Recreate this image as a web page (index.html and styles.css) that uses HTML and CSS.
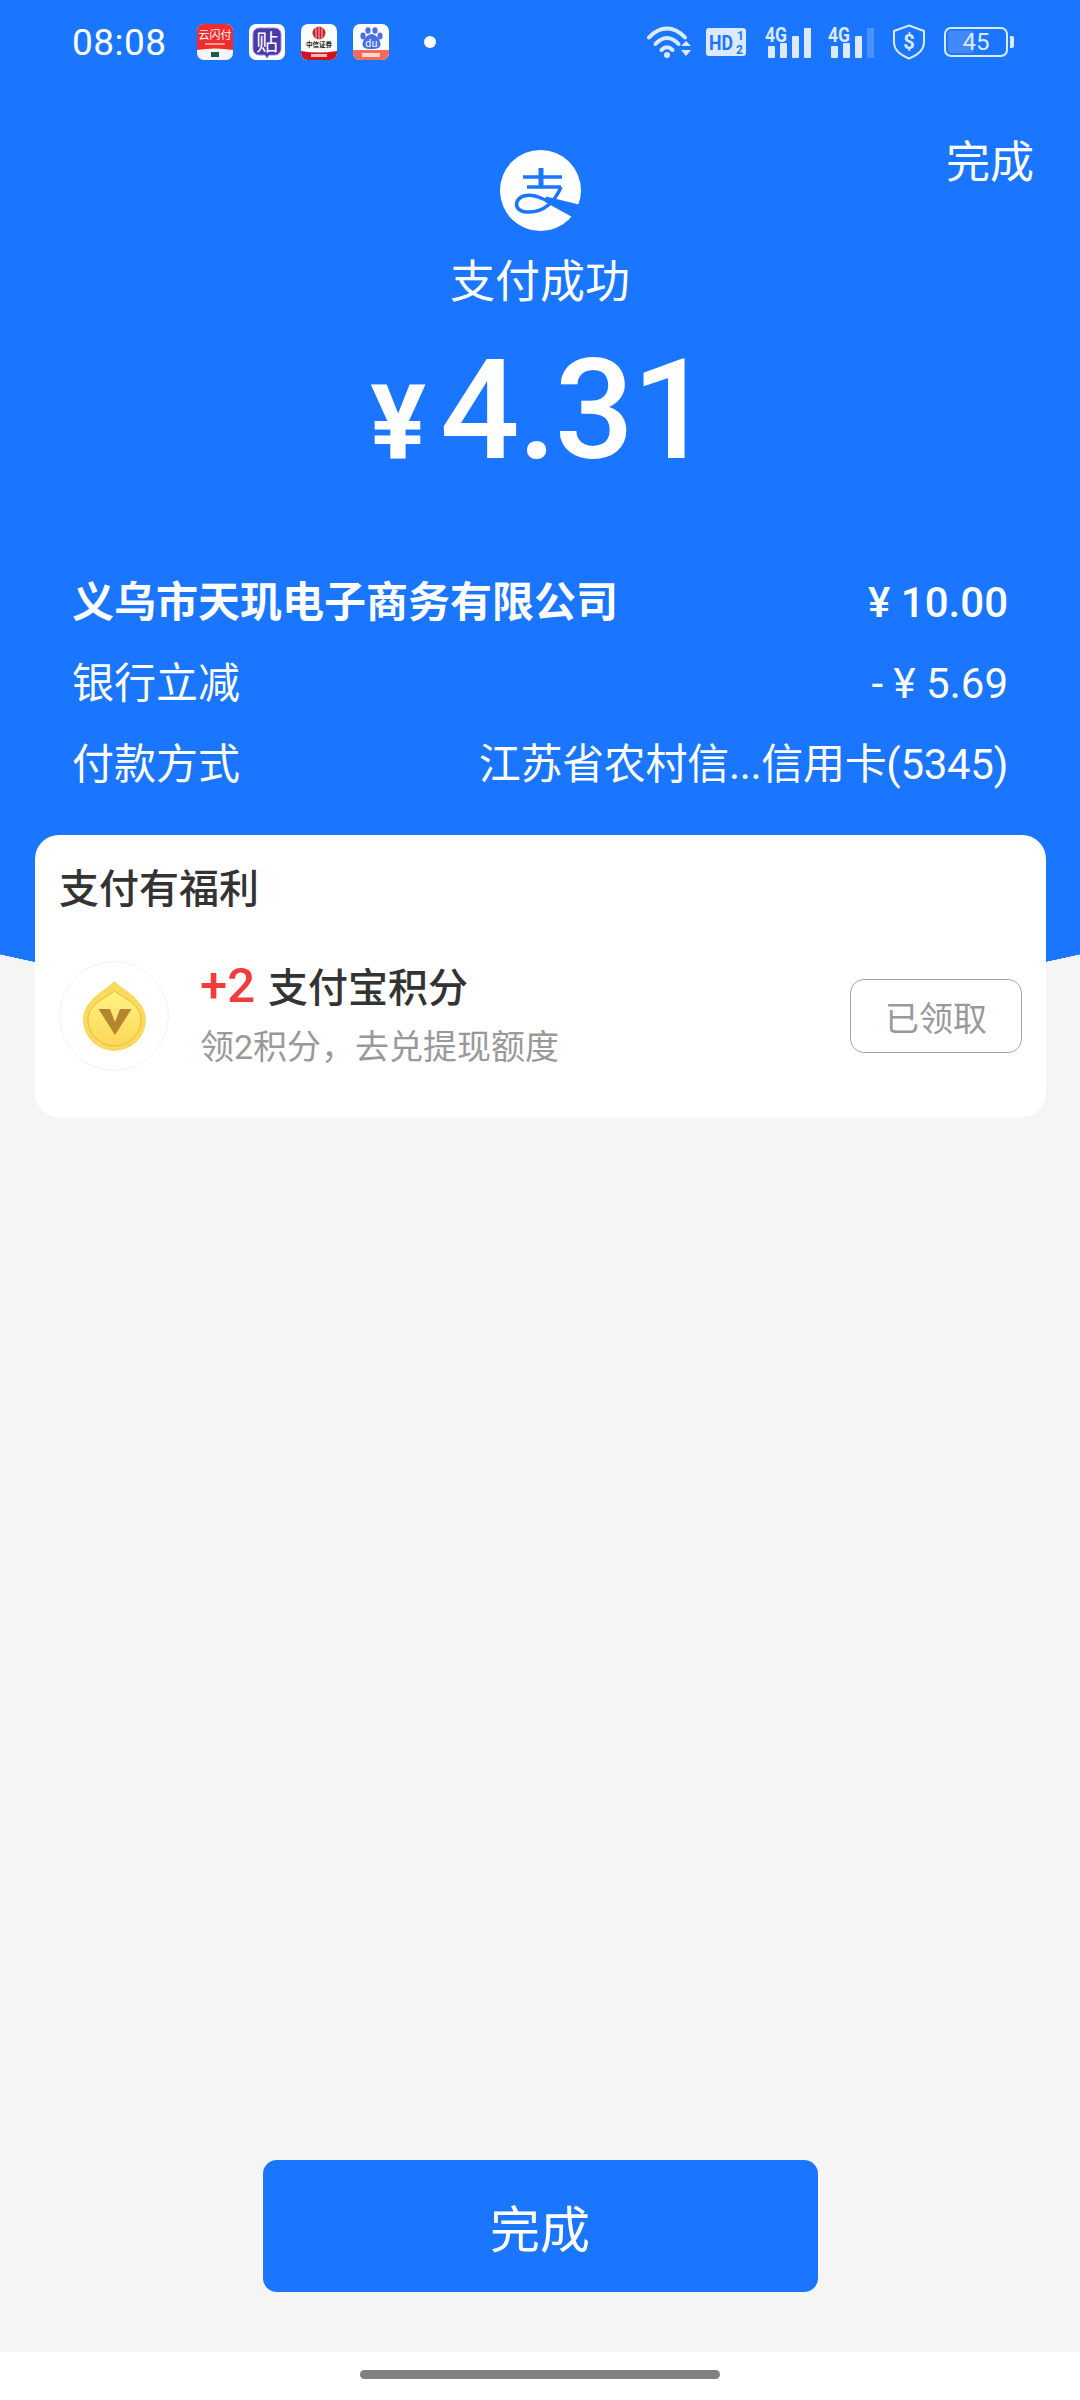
FILE: index.html
```html
<!DOCTYPE html>
<html lang="zh-CN">
<head>
  <meta charset="UTF-8" />
  <meta name="viewport" content="width=device-width, initial-scale=1.0"/>
  <title>支付成功</title>
  <link rel="stylesheet" href="styles.css">
</head>
<body>
  <div class="page">
    <header class="hero">
      <div class="status-bar">
        <span class="time">08:08</span>
        <div class="app-icons">
          <svg class="app-icon" viewBox="0 0 36 36">
            <rect width="36" height="36" rx="7" fill="#f4f4f4"/>
            <path d="M0 7a7 7 0 0 1 7-7h22a7 7 0 0 1 7 7v19q-18-3-36 0z" fill="#f22c2c"/>
            <text x="18" y="15" class="icon-text" font-size="11" fill="#fff">云闪付</text>
            <rect x="8" y="19" width="20" height="2" fill="#ff9a9a"/>
            <rect x="14" y="28" width="8" height="5" fill="#1d5a50"/>
          </svg>
          <svg class="app-icon" viewBox="0 0 36 36">
            <rect width="36" height="36" rx="7" fill="#fff"/>
            <path d="M10 4h16a6 6 0 0 1 6 6v15a6 6 0 0 1-6 6h-6l-2 3-2-3h-6a6 6 0 0 1-6-6V10a6 6 0 0 1 6-6z" fill="#4a3aa5" stroke="#9a8ae0" stroke-width="1"/>
            <text x="18" y="26" class="icon-text" font-size="22" fill="#fff">贴</text>
          </svg>
          <svg class="app-icon" viewBox="0 0 36 36">
            <rect width="36" height="36" rx="7" fill="#fff"/>
            <circle cx="18" cy="9" r="6.500" fill="#c8202c"/>
            <path d="M18 2v14M15 3v12M21 3v12" stroke="#fff" stroke-width=".7"/>
            <text x="18" y="23" class="icon-text" font-size="6.500" font-weight="700" fill="#222">中信证券</text>
            <path d="M0 27q18 3 36 0v2a7 7 0 0 1-7 7H7a7 7 0 0 1-7-7z" fill="#d0121f"/>
            <rect x="10" y="30" width="16" height="3" fill="#f7b9b9"/>
          </svg>
          <svg class="app-icon" viewBox="0 0 36 36">
            <rect width="36" height="36" rx="7" fill="#fff"/>
            <g fill="#4a6fe0">
              <ellipse cx="10" cy="12" rx="2.600" ry="3.400"/>
              <ellipse cx="15" cy="6.500" rx="2.600" ry="3.200"/>
              <ellipse cx="22" cy="6.500" rx="2.600" ry="3.200"/>
              <ellipse cx="27" cy="12" rx="2.600" ry="3.400"/>
              <path d="M18.500 10c4 0 9 6 9 10s-3 5-9 5-9-1-9-5 5-10 9-10z"/>
            </g>
            <text x="18.500" y="23" class="icon-text" font-size="10" fill="#fff">du</text>
            <path d="M0 26h36v3a7 7 0 0 1-7 7H7a7 7 0 0 1-7-7z" fill="#f56b5b"/>
            <rect x="9" y="29" width="18" height="4" fill="#ffd9c9"/>
          </svg>
        </div>
        <span class="status-dot"></span>
        <div class="status-icons">
          <svg class="wifi" viewBox="0 0 44 33" fill="none" stroke="#dce9ff" stroke-linecap="round">
            <path d="M2 11.500C13-.5 27-.5 38 11.500" stroke-width="4"/>
            <path d="M8.500 18C16 10 24 10 31.500 18" stroke-width="4"/>
            <path d="M14.500 24c3.500-3.500 7.500-3.500 11 0" stroke-width="4"/>
            <circle cx="20" cy="29" r="3" fill="#dce9ff" stroke="none"/>
            <path d="M39 15l5 5H34zM34 24h10l-5 6z" fill="#dce9ff" stroke="none"/>
          </svg>
          <svg class="hd" viewBox="0 0 40 28">
            <rect width="40" height="28" rx="3" fill="#dce9ff"/>
            <text x="3" y="22" class="hd-text" font-size="21" textLength="24" lengthAdjust="spacingAndGlyphs">HD</text>
            <text x="31" y="12" class="hd-text" font-size="12">1</text>
            <text x="30" y="26" class="hd-text" font-size="12">2</text>
          </svg>
          <svg class="signal" viewBox="0 0 46 32">
            <text x="0" y="15.500" class="sig-text" font-size="20" textLength="22" lengthAdjust="spacingAndGlyphs">4G</text>
            <g fill="#dce9ff">
              <rect x="3" y="20" width="7" height="12" rx="1"/>
              <rect x="15" y="17" width="7" height="15" rx="1"/>
              <rect x="27" y="10" width="7" height="22" rx="1"/>
              <rect x="39" y="2" width="7" height="30" rx="1"/>
            </g>
          </svg>
          <svg class="signal" viewBox="0 0 46 32">
            <text x="0" y="15.500" class="sig-text" font-size="20" textLength="22" lengthAdjust="spacingAndGlyphs">4G</text>
            <g fill="#dce9ff">
              <rect x="3" y="20" width="7" height="12" rx="1"/>
              <rect x="15" y="17" width="7" height="15" rx="1"/>
              <rect x="27" y="10" width="7" height="22" rx="1"/>
              <rect x="39" y="2" width="7" height="30" rx="1" opacity=".25"/>
            </g>
          </svg>
          <svg class="shield" viewBox="0 0 34 36">
            <path d="M17 1.500l15 5.500v11c0 8-6 13-15 16.500C8 31 2 26 2 18V7z" fill="none" stroke="#dce9ff" stroke-width="2"/>
            <text x="17" y="25" class="shield-text" font-size="20">$</text>
          </svg>
          <div class="battery">
            <div class="battery-body">
              <span class="battery-fill"></span>
              <span class="battery-num">45</span>
            </div>
            <span class="battery-tip"></span>
          </div>
        </div>
      </div>

      <div class="top-row">
        <svg class="logo" viewBox="0 0 81 81">
          <circle cx="40.500" cy="40.500" r="40.500" fill="#fff"/>
          <g fill="none" stroke="#1a76ff" stroke-width="3.500">
            <path d="M23 27H62M27 37H61"/>
            <path d="M41 18V37" stroke-width="5"/>
            <path d="M61 37C55 51 44 63 27 62C19 61.500 15 57 17 52C19 46 27 44 35 46C39 47 43 49 48 51"/>
          </g>
          <path d="M46 46.500L81 55L74 68L45 52z" fill="#1a76ff"/>
        </svg>
        <a class="done-link">完成</a>
      </div>
      <div class="pay-title">支付成功</div>
      <div class="amount"><span class="yen">¥</span><span class="amount-num">4.31</span></div>

      <div class="detail-row">
        <span class="detail-strong">义乌市天玑电子商务有限公司</span>
        <span class="detail-price">¥ 10.00</span>
      </div>
      <div class="detail-row">
        <span>银行立减</span>
        <span>- ¥ 5.69</span>
      </div>
      <div class="detail-row">
        <span>付款方式</span>
        <span class="detail-tight">江苏省农村信...信用卡(5345)</span>
      </div>
    </header>

    <section class="card">
      <h3 class="card-title">支付有福利</h3>
      <div class="benefit">
        <div class="coin">
          <svg viewBox="0 0 63 70">
            <defs>
              <linearGradient id="coinFill" x1="0" y1="0" x2="0" y2="1">
                <stop offset="0" stop-color="#fff480"/>
                <stop offset="1" stop-color="#ffd65a"/>
              </linearGradient>
            </defs>
            <path d="M31.500 0C37 7 63 18 63 38.500A31.500 31.500 0 0 1 0 38.500C0 18 26 7 31.500 0z" fill="#f9da5c"/>
            <path d="M31.500 10C36 15 58 22 58 38.500A26.500 26.500 0 0 1 5 38.500C5 22 27 15 31.500 10z" fill="url(#coinFill)" stroke="#e9b93e" stroke-width="1"/>
            <path d="M15.500 28H27L32 41L37 28H48.500L32 54z" fill="#b5862e"/>
          </svg>
        </div>
        <div class="benefit-text">
          <div class="benefit-name"><span class="plus">+2</span> 支付宝积分</div>
          <div class="benefit-sub">领2积分，去兑提现额度</div>
        </div>
        <button class="claimed">已领取</button>
      </div>
    </section>

    <div class="spacer"></div>

    <button class="done-btn">完成</button>

    <div class="home-area"><span class="home-bar"></span></div>
  </div>
</body>
</html>
```

FILE: styles.css
```css
* {
  box-sizing: border-box;
}

body {
  margin: 0;
  font-family: Roboto, "Noto Sans CJK SC", sans-serif;
  background-color: #f5f5f5;
}

.page {
  width: 1080px;
  height: 2400px;
  display: flex;
  flex-direction: column;
}

/* blue area, the bottom edge is a very wide circle */
.hero {
  height: 1015px;
  margin-bottom: -180px;
  padding: 0 72px;
  color: #fff;
  background: radial-gradient(circle 2445px at 50% -1430px, #1a76ff 99.98%, transparent 100%);
}

.status-bar {
  display: flex;
  align-items: center;
  height: 84px;
  margin-right: -6px;
}

.time {
  font-size: 37px;
  width: 125px;
  letter-spacing: .5px;
}

.app-icons {
  display: flex;
  gap: 16px;
}

.app-icon {
  width: 36px;
  height: 36px;
}

.icon-text {
  font-family: "Noto Sans CJK SC", sans-serif;
  text-anchor: middle;
}

.status-dot {
  width: 12px;
  height: 12px;
  margin-left: 35px;
  border-radius: 50%;
  background-color: #fff;
}

.status-icons {
  display: flex;
  align-items: center;
  margin-left: auto;
}

.wifi {
  width: 44px;
  height: 33px;
}

.hd {
  width: 40px;
  height: 28px;
  margin-left: 15px;
}

.hd-text {
  font-family: Roboto, sans-serif;
  font-weight: 700;
  fill: #1a76ff;
}

.signal {
  width: 46px;
  height: 32px;
  margin-left: 19px;
  overflow: visible;
}

.signal + .signal {
  margin-left: 17px;
}

.sig-text {
  font-family: Roboto, sans-serif;
  font-weight: 700;
  fill: #dce9ff;
}

.shield {
  width: 34px;
  height: 36px;
  margin-left: 18px;
}

.shield-text {
  font-family: Roboto, sans-serif;
  font-weight: 700;
  text-anchor: middle;
  fill: #dce9ff;
}

.battery {
  display: flex;
  align-items: center;
  margin-left: 18px;
}

.battery-body {
  position: relative;
  width: 64px;
  height: 30px;
  border: 2px solid #dce9ff;
  border-radius: 7px;
  padding: 2px;
}

.battery-fill {
  display: block;
  width: 26px;
  height: 100%;
  border-radius: 3px;
  background-color: #4488ff;
}

.battery-num {
  position: absolute;
  top: 0;
  left: 0;
  right: 0;
  line-height: 26px;
  text-align: center;
  font-size: 24px;
  color: #dce9ff;
}

.battery-tip {
  width: 4px;
  height: 12px;
  margin-left: 2px;
  border-radius: 0 2px 2px 0;
  background-color: #dce9ff;
}

.top-row {
  position: relative;
  display: flex;
  justify-content: center;
  margin-top: 66px;
}

.logo {
  width: 81px;
  height: 81px;
}

.done-link {
  position: absolute;
  top: -17px;
  right: -26px;
  font-size: 44px;
  line-height: 60px;
}

.pay-title {
  margin-top: 22px;
  text-align: center;
  font-size: 45px;
  line-height: 60px;
}

.amount {
  display: flex;
  justify-content: center;
  align-items: baseline;
  margin-top: 22px;
  height: 150px;
  line-height: 150px;
}

.yen {
  font-size: 104px;
  font-weight: 700;
  margin-right: 14px;
}

.amount-num {
  font-size: 140px;
  font-weight: 500;
  letter-spacing: -2px;
}

.detail-row {
  display: flex;
  justify-content: space-between;
  font-size: 42px;
  line-height: 81px;
}

.amount + .detail-row {
  margin-top: 77px;
}

.detail-strong {
  font-weight: 700;
}

.detail-price {
  font-weight: 500;
}

.detail-tight {
  letter-spacing: -.3px;
}

.card {
  position: relative;
  width: 1011px;
  height: 282px;
  margin-left: 35px;
  padding: 0 24px;
  border-radius: 24px;
  background-color: #fff;
}

.card-title {
  margin: 0;
  padding-top: 28px;
  font-size: 40px;
  line-height: 54px;
  font-weight: 500;
  color: #333;
}

.benefit {
  display: flex;
  align-items: center;
  margin-top: 44px;
}

.coin {
  display: flex;
  align-items: center;
  justify-content: center;
  width: 110px;
  height: 110px;
  border: 1px solid #f3f3f3;
  border-radius: 50%;
}

.coin svg {
  width: 63px;
  height: 70px;
}

.benefit-text {
  flex: 1;
  margin-left: 31px;
}

.benefit-name {
  font-size: 40px;
  line-height: 46px;
  font-weight: 500;
  color: #333;
}

.plus {
  font-size: 49px;
  margin-right: 3px;
  color: #f23c3c;
}

.benefit-sub {
  margin-top: 12px;
  font-size: 34px;
  line-height: 46px;
  color: #999;
}

.claimed {
  width: 172px;
  height: 74px;
  padding: 0;
  border: 1.500px solid #a5a5a5;
  border-radius: 14px;
  background-color: #fff;
  font-family: inherit;
  font-size: 34px;
  color: #999;
}

.spacer {
  flex: 1;
}

.done-btn {
  width: 555px;
  height: 132px;
  margin: 0 auto 60px;
  border: none;
  border-radius: 14px;
  background-color: #1a76ff;
  font-family: inherit;
  font-size: 50px;
  color: #fff;
}

.home-area {
  display: flex;
  justify-content: center;
  height: 48px;
  padding-top: 18px;
  background-color: #fff;
}

.home-bar {
  width: 360px;
  height: 9px;
  border-radius: 5px;
  background-color: #808080;
}
```
